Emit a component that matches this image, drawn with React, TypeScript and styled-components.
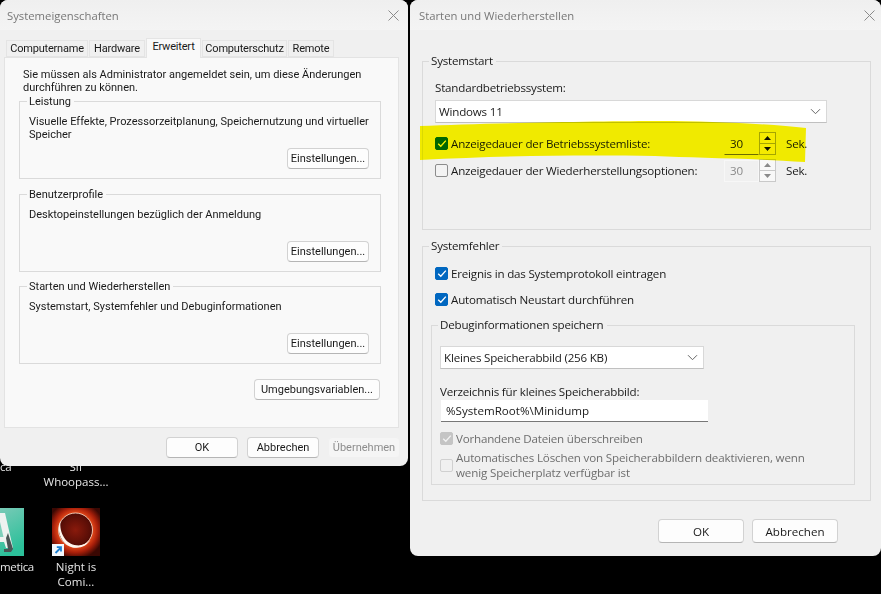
import React from "react";
import styled, { createGlobalStyle } from "styled-components";

const Global = createGlobalStyle`
  html, body { margin: 0; padding: 0; background: #000; }
  body { font-family: "Open Sans", "Noto Sans", "Liberation Sans", sans-serif; }
`;

const Desktop = styled.div`
  position: relative;
  width: 881px;
  height: 594px;
  background: #000;
  overflow: hidden;
`;

const Shortcut = styled.div<{ $x: number; $y: number; $w?: number; $end?: boolean }>`
  position: absolute;
  left: ${(p) => p.$x}px;
  top: ${(p) => p.$y}px;
  width: ${(p) => p.$w ?? 76}px;
  display: flex;
  flex-direction: column;
  align-items: ${(p) => (p.$end ? "flex-start" : "center")};
  color: #e6e6e6;
  font-size: 11.5px;
  line-height: 15px;
  text-align: center;
  letter-spacing: ${(p) => (p.$end ? "-0.35px" : "0")};
`;

const IconArt = styled.div`
  position: relative;
  width: 48px;
  height: 48px;
  margin-bottom: 3px;
`;

const Badge = styled.div`
  position: absolute;
  left: 0;
  bottom: 0;
  width: 12px;
  height: 12px;
  background: #f4f8fc;
  display: flex;
`;

const Win = styled.section<{ $x: number; $w: number; $h: number; $font: string }>`
  position: absolute;
  left: ${(p) => p.$x}px;
  top: 0;
  width: ${(p) => p.$w}px;
  height: ${(p) => p.$h}px;
  background: #f0f0f0;
  border-radius: 8px;
  overflow: hidden;
  display: flex;
  flex-direction: column;
  font-family: ${(p) => p.$font}, "Liberation Sans", sans-serif;
`;

const TitleBar = styled.header<{ $pad: number; $pr: number }>`
  height: 30px;
  flex: none;
  display: flex;
  align-items: center;
  justify-content: space-between;
  padding: 0 ${(p) => p.$pr}px 0 ${(p) => p.$pad}px;
  background: linear-gradient(#efefef, #f4f4f4);
  color: #777;
  font-family: "Open Sans", sans-serif;
  font-size: 11.3px;
`;

const TabStrip = styled.nav`
  height: 27px;
  flex: none;
  display: flex;
  align-items: flex-end;
  padding-left: 6px;
  gap: 1px;
`;

const Tab = styled.div<{ $w: number; $active?: boolean }>`
  width: ${(p) => p.$w}px;
  height: ${(p) => (p.$active ? 20 : 17)}px;
  margin-bottom: ${(p) => (p.$active ? -1 : 0)}px;
  position: relative;
  z-index: ${(p) => (p.$active ? 2 : 0)};
  display: flex;
  align-items: ${(p) => (p.$active ? "flex-start" : "center")};
  justify-content: center;
  box-sizing: border-box;
  background: ${(p) => (p.$active ? "#f9f9f9" : "#f0f0f0")};
  border: 1px solid #e4e4e4;
  border-bottom: ${(p) => (p.$active ? "none" : "1px solid #e4e4e4")};
  color: #1a1a1a;
  font-size: 11px;
  line-height: 15px;
  letter-spacing: -0.2px;
`;

const TabPanel = styled.div`
  margin-left: 4px;
  width: 395px;
  height: 371px;
  flex: none;
  box-sizing: border-box;
  background: #f9f9f9;
  border: 1px solid #e3e3e3;
  padding: 9px 17px 0 14px;
  display: flex;
  flex-direction: column;
  color: #1a1a1a;
  font-size: 11px;
  line-height: 13px;
`;

const Intro = styled.p`
  margin: 1px 0 0 4px;
  height: 26px;
  width: 340px;
`;

const Group = styled.fieldset<{ $h: number; $mt?: number; $ml?: number; $w?: number }>`
  margin: ${(p) => p.$mt ?? 0}px 0 0 ${(p) => p.$ml ?? 0}px;
  padding: 0;
  height: ${(p) => p.$h}px;
  width: ${(p) => (p.$w ? `${p.$w}px` : "auto")};
  min-width: 0;
  box-sizing: border-box;
  border: 1px solid #dadada;
`;

const GroupTitle = styled.legend<{ $ml: number; $lh?: number }>`
  margin-left: ${(p) => p.$ml}px;
  padding: 0 3px 0 2px;
  line-height: ${(p) => p.$lh ?? 14}px;
  height: 14px;
`;

const GroupBody = styled.p`
  margin: 7px 8px 7px 9px;
  height: 26px;
`;

const ButtonRow = styled.div<{ $pr: number; $mt?: number; $gap?: number }>`
  display: flex;
  justify-content: flex-end;
  gap: ${(p) => p.$gap ?? 8}px;
  padding-right: ${(p) => p.$pr}px;
  margin-top: ${(p) => p.$mt ?? 0}px;
`;

const Button = styled.button<{ $w: number; $h?: number; $disabled?: boolean; $size?: number }>`
  width: ${(p) => p.$w}px;
  height: ${(p) => p.$h ?? 21}px;
  padding: 0;
  box-sizing: border-box;
  background: ${(p) => (p.$disabled ? "#f5f5f5" : "#fdfdfd")};
  border: 1px solid ${(p) => (p.$disabled ? "#f0f0f0" : "#d2d2d2")};
  border-bottom-color: ${(p) => (p.$disabled ? "#f0f0f0" : "#b5b5b5")};
  border-radius: 4px;
  color: ${(p) => (p.$disabled ? "#8d8d8d" : "#1a1a1a")};
  font-family: inherit;
  font-size: ${(p) => p.$size ?? 11}px;
`;

const RightBody = styled.div`
  flex: 1;
  padding: 24px 10px 0 12px;
  display: flex;
  flex-direction: column;
  color: #1a1a1a;
  font-size: 11.6px;
  line-height: 15px;
  letter-spacing: -0.2px;
`;

const Stack = styled.div<{ $pt: number; $pl: number }>`
  padding: ${(p) => p.$pt}px 0 0 ${(p) => p.$pl}px;
  display: flex;
  flex-direction: column;
`;

const FieldLabel = styled.label<{ $mt?: number; $mb: number }>`
  display: block;
  margin-top: ${(p) => p.$mt ?? 0}px;
  margin-bottom: ${(p) => p.$mb}px;
`;

const Select = styled.div<{ $w: number }>`
  width: ${(p) => p.$w}px;
  height: 23px;
  box-sizing: border-box;
  background: #fff;
  border: 1px solid #d8d8d8;
  border-bottom-color: #c0c0c0;
  padding: 0 5px 0 3px;
  display: flex;
  align-items: center;
  justify-content: space-between;
`;

const CheckRow = styled.div<{ $mt: number; $h?: number; $w?: number; $muted?: boolean }>`
  display: flex;
  align-items: center;
  gap: 3px;
  margin-top: ${(p) => p.$mt}px;
  height: ${(p) => p.$h ?? 15}px;
  width: ${(p) => (p.$w ? `${p.$w}px` : "auto")};
  color: ${(p) => (p.$muted ? "#6e6e6e" : "inherit")};
`;

const Box = styled.span<{ $tone: "blue" | "grey" | "empty" | "emptyMuted" }>`
  width: 13px;
  height: 13px;
  flex: none;
  box-sizing: border-box;
  display: flex;
  align-items: center;
  justify-content: center;
  border-radius: 2px;
  background: ${(p) => ({ blue: "#0067c0", grey: "#c4c4c4", empty: "#f3f3f3", emptyMuted: "#f0f0f0" })[p.$tone]};
  border: 1px solid ${(p) => ({ blue: "#0067c0", grey: "#c4c4c4", empty: "#8c8c8c", emptyMuted: "#d0d0d0" })[p.$tone]};
`;

const RowLabel = styled.span`
  flex: 1;
`;

const SpinGroup = styled.div`
  display: flex;
  align-items: center;
  flex: none;
`;

const SpinInput = styled.div<{ $off?: boolean }>`
  width: 35px;
  height: 22px;
  flex: none;
  box-sizing: border-box;
  padding-left: 5px;
  display: flex;
  align-items: center;
  color: ${(p) => (p.$off ? "#8a8a8a" : "#222")};
  border: 1px solid ${(p) => (p.$off ? "#f7f7f7" : "transparent")};
  border-bottom: 1px solid ${(p) => (p.$off ? "#f7f7f7" : "#6b6b1c")};
`;

const SpinButtons = styled.div<{ $off?: boolean }>`
  width: 17px;
  height: 23px;
  flex: none;
  box-sizing: border-box;
  border: 1px solid ${(p) => (p.$off ? "#c9c9c9" : "#a5a5a5")};
  display: flex;
  flex-direction: column;
  gap: 1px;
  background: ${(p) => (p.$off ? "#c9c9c9" : "#a5a5a5")};
`;

const SpinPart = styled.span`
  flex: 1;
  background: #f8f8f8;
  display: flex;
  align-items: center;
  justify-content: center;
`;

const Unit = styled.span`
  margin-left: 10px;
  width: 24px;
  flex: none;
`;

const PathInput = styled.div`
  width: 267px;
  height: 22px;
  margin-left: 1px;
  box-sizing: border-box;
  background: #fff;
  border-bottom: 1px solid #777;
  padding-left: 5px;
  display: flex;
  align-items: center;
  letter-spacing: 0;
`;

const WrapLabel = styled.span`
  flex: 1;
  line-height: 15px;
  letter-spacing: -0.15px;
`;

const Highlight = styled.svg`
  position: absolute;
  left: 420px;
  top: 120px;
  pointer-events: none;
  mix-blend-mode: darken;
`;

const Close = () => (
  <svg width="11" height="11" viewBox="0 0 11 11" fill="none" stroke="#8a8a8a" strokeWidth="1">
    <path d="M.5.5l10 10M10.5.5l-10 10" />
  </svg>
);

const Chevron = () => (
  <svg width="11" height="7" viewBox="0 0 11 7" fill="none" stroke="#666" strokeWidth="1">
    <path d="M1 1.2l4.5 4.5L10 1.2" />
  </svg>
);

const Check = ({ color = "#fff" }: { color?: string }) => (
  <svg width="10" height="9" viewBox="0 0 10 9" fill="none" stroke={color} strokeWidth="1.3">
    <path d="M1.2 4.8l2.6 2.4L8.8 1.6" />
  </svg>
);

const Arrow = ({ up, color }: { up?: boolean; color: string }) => (
  <svg width="7" height="4" viewBox="0 0 7 4" fill={color}>
    <path d={up ? "M3.5 0L7 4H0z" : "M0 0h7L3.5 4z"} />
  </svg>
);

const Spinner = ({ off }: { off?: boolean }) => (
  <SpinGroup>
    <SpinInput $off={off}>30</SpinInput>
    <SpinButtons $off={off}>
      <SpinPart>
        <Arrow up color={off ? "#8a8a8a" : "#111"} />
      </SpinPart>
      <SpinPart>
        <Arrow color={off ? "#8a8a8a" : "#111"} />
      </SpinPart>
    </SpinButtons>
    <Unit>Sek.</Unit>
  </SpinGroup>
);

const EclipseArt = () => (
  <svg width="48" height="48" viewBox="0 0 48 48">
    <defs>
      <radialGradient id="glow" cx="49%" cy="46%" r="60%">
        <stop offset="55%" stopColor="#f0501c" />
        <stop offset="78%" stopColor="#a81f0a" />
        <stop offset="100%" stopColor="#3a0803" />
      </radialGradient>
      <radialGradient id="disc" cx="50%" cy="50%" r="55%">
        <stop offset="0%" stopColor="#8a1a0c" />
        <stop offset="100%" stopColor="#4a0a05" />
      </radialGradient>
    </defs>
    <rect width="48" height="48" fill="url(#glow)" />
    <circle cx="23.5" cy="22" r="17" fill="url(#disc)" stroke="#ffe9d6" strokeWidth="0.8" />
    <path d="M8.5 13C3 25 12 40 24.5 39.8c6 0 11-3 14-8-4 4-9 6-14 5.5C14 36.5 7 25 8.5 13z" fill="#fff6ee" />
  </svg>
);

const TealArt = () => (
  <svg width="48" height="48" viewBox="0 0 48 48">
    <defs>
      <linearGradient id="teal" x1="0" y1="0" x2="0.6" y2="1">
        <stop offset="0%" stopColor="#8fcdbf" />
        <stop offset="100%" stopColor="#2cc09a" />
      </linearGradient>
      <filter id="soft">
        <feGaussianBlur stdDeviation="0.7" />
      </filter>
    </defs>
    <rect width="48" height="48" fill="url(#teal)" />
    <g filter="url(#soft)">
      <path d="M18 5h11l8 35h-7l-2-6H14z" fill="#eef2f0" />
      <path d="M24 14l3.5 15H20z" fill="#7fd0bb" />
      <path d="M32 25l5 16-2 3h-7v-3h4l-2-11z" fill="#4a5554" />
    </g>
  </svg>
);

const LEFT_FONT = '"Roboto"';
const RIGHT_FONT = '"Open Sans"';

export default function App() {
  return (
    <Desktop>
      <Global />
      <Shortcut $x={0} $y={459} $w={20} $end>
        <span>ca</span>
      </Shortcut>
      <Shortcut $x={38} $y={459}>
        <span>Sif</span>
        <span>Whoopass...</span>
      </Shortcut>
      <Shortcut $x={-38} $y={508}>
        <IconArt>
          <TealArt />
        </IconArt>
      </Shortcut>
      <Shortcut $x={0} $y={559} $w={34} $end>
        <span>metica</span>
      </Shortcut>
      <Shortcut $x={38} $y={508}>
        <IconArt>
          <EclipseArt />
          <Badge>
            <svg width="12" height="12" viewBox="0 0 12 12" fill="none" stroke="#1b7fd1" strokeWidth="1.8">
              <path d="M3.5 9L9 3.5M4.8 3.2H9v4.2" />
            </svg>
          </Badge>
        </IconArt>
        <span>Night is</span>
        <span>Comi...</span>
      </Shortcut>

      <Win $x={0} $w={408} $h={466} $font={LEFT_FONT}>
        <TitleBar $pad={7} $pr={9}>
          <span>Systemeigenschaften</span>
          <Close />
        </TitleBar>
        <TabStrip>
          <Tab $w={82}>Computername</Tab>
          <Tab $w={56}>Hardware</Tab>
          <Tab $w={55} $active>
            Erweitert
          </Tab>
          <Tab $w={85}>Computerschutz</Tab>
          <Tab $w={46}>Remote</Tab>
        </TabStrip>
        <TabPanel>
          <Intro>Sie müssen als Administrator angemeldet sein, um diese Änderungen durchführen zu können.</Intro>
          <Group $h={85}>
            <GroupTitle $ml={7} $lh={16}>
              Leistung
            </GroupTitle>
            <GroupBody>Visuelle Effekte, Prozessorzeitplanung, Speichernutzung und virtueller Speicher</GroupBody>
            <ButtonRow $pr={11}>
              <Button $w={82}>Einstellungen...</Button>
            </ButtonRow>
          </Group>
          <Group $h={85} $mt={8}>
            <GroupTitle $ml={7} $lh={16}>
              Benutzerprofile
            </GroupTitle>
            <GroupBody>Desktopeinstellungen bezüglich der Anmeldung</GroupBody>
            <ButtonRow $pr={11}>
              <Button $w={82}>Einstellungen...</Button>
            </ButtonRow>
          </Group>
          <Group $h={85} $mt={7}>
            <GroupTitle $ml={7} $lh={16}>
              Starten und Wiederherstellen
            </GroupTitle>
            <GroupBody>Systemstart, Systemfehler und Debuginformationen</GroupBody>
            <ButtonRow $pr={11}>
              <Button $w={82}>Einstellungen...</Button>
            </ButtonRow>
          </Group>
          <ButtonRow $pr={1} $mt={15}>
            <Button $w={126}>Umgebungsvariablen...</Button>
          </ButtonRow>
        </TabPanel>
        <ButtonRow $pr={8} $mt={9} $gap={9}>
          <Button $w={72}>OK</Button>
          <Button $w={72}>Abbrechen</Button>
          <Button $w={72} $disabled>
            Übernehmen
          </Button>
        </ButtonRow>
      </Win>

      <Win $x={410} $w={471} $h={556} $font={RIGHT_FONT}>
        <TitleBar $pad={9} $pr={6}>
          <span>Starten und Wiederherstellen</span>
          <Close />
        </TitleBar>
        <RightBody>
          <Group $h={176}>
            <GroupTitle $ml={6}>Systemstart</GroupTitle>
            <Stack $pt={12} $pl={12}>
              <FieldLabel $mb={5}>Standardbetriebssystem:</FieldLabel>
              <Select $w={392}>
                <span>Windows 11</span>
                <Chevron />
              </Select>
              <CheckRow $mt={13} $w={375}>
                <Box $tone="blue">
                  <Check />
                </Box>
                <RowLabel>Anzeigedauer der Betriebssystemliste:</RowLabel>
                <Spinner />
              </CheckRow>
              <CheckRow $mt={12} $w={375}>
                <Box $tone="empty" />
                <RowLabel>Anzeigedauer der Wiederherstellungsoptionen:</RowLabel>
                <Spinner off />
              </CheckRow>
            </Stack>
          </Group>
          <Group $h={262} $mt={9}>
            <GroupTitle $ml={6}>Systemfehler</GroupTitle>
            <Stack $pt={13} $pl={12}>
              <CheckRow $mt={0}>
                <Box $tone="blue">
                  <Check />
                </Box>
                <span>Ereignis in das Systemprotokoll eintragen</span>
              </CheckRow>
              <CheckRow $mt={11}>
                <Box $tone="blue">
                  <Check />
                </Box>
                <span>Automatisch Neustart durchführen</span>
              </CheckRow>
            </Stack>
            <Group $h={167} $mt={11} $ml={8} $w={424}>
              <GroupTitle $ml={6}>Debuginformationen speichern</GroupTitle>
              <Stack $pt={14} $pl={8}>
                <Select $w={264}>
                  <span>Kleines Speicherabbild (256 KB)</span>
                  <Chevron />
                </Select>
                <FieldLabel $mt={15} $mb={1}>
                  Verzeichnis für kleines Speicherabbild:
                </FieldLabel>
                <PathInput>%SystemRoot%\Minidump</PathInput>
                <CheckRow $mt={9} $muted>
                  <Box $tone="grey">
                    <Check color="#f2f2f2" />
                  </Box>
                  <span>Vorhandene Dateien überschreiben</span>
                </CheckRow>
                <CheckRow $mt={4} $h={30} $muted>
                  <Box $tone="emptyMuted" />
                  <WrapLabel>
                    Automatisches Löschen von Speicherabbildern deaktivieren, wenn
                    <br />
                    wenig Speicherplatz verfügbar ist
                  </WrapLabel>
                </CheckRow>
              </Stack>
            </Group>
          </Group>
          <ButtonRow $pr={33} $mt={18}>
            <Button $w={86} $h={24} $size={11.6}>
              OK
            </Button>
            <Button $w={86} $h={24} $size={11.6}>
              Abbrechen
            </Button>
          </ButtonRow>
        </RightBody>
      </Win>

      <Highlight width="387" height="44" viewBox="0 0 387 44">
        <path
          d="M0 6C70 3 190 1 240 1c50 0 110 3 146 7l-1 34c-60-4-110-4-150-6-60-1-140-1-235 4z"
          fill="#f5ea00"
        />
      </Highlight>
    </Desktop>
  );
}
